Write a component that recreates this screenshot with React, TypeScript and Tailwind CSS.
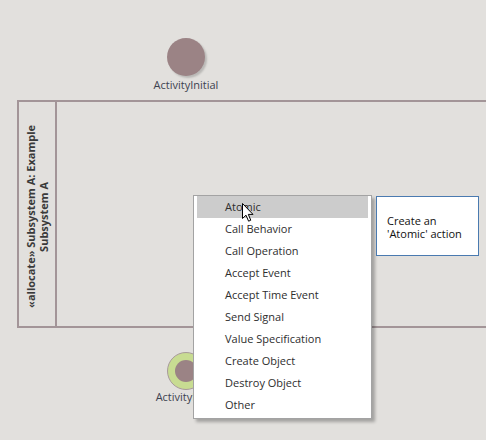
const items = [
  "Atomic",
  "Call Behavior",
  "Call Operation",
  "Accept Event",
  "Accept Time Event",
  "Send Signal",
  "Value Specification",
  "Create Object",
  "Destroy Object",
  "Other",
];

function Cursor() {
  return (
    <svg width="13" height="20" viewBox="0 0 13 20" className="absolute left-[242px] top-[203px]">
      <path d="M0.5 0.5 L0.5 15.5 L4 12.2 L6.6 18.2 L8.8 17.2 L6.3 11.4 L11 11.4 Z" fill="#fff" stroke="#000" strokeWidth="1" strokeLinejoin="round" />
    </svg>
  );
}

export default function App() {
  return (
    <div className="relative w-[486px] h-[440px] overflow-hidden bg-[#e2e0dd] font-['Open_Sans',sans-serif]">
      {/* initial node */}
      <div className="absolute left-[125px] top-[38px] w-[122px] flex flex-col items-center">
        <div className="w-[38px] h-[38px] rounded-full bg-[#9b8385] shadow-[2px_2px_2px_rgba(0,0,0,0.18)]" />
        <div className="mt-[1px] text-[11px] text-[#3d4250]">ActivityInitial</div>
      </div>

      {/* partition */}
      <div className="absolute left-[17px] top-[100px] w-[490px] h-[228px] flex border-2 border-[#a39598]">
        <div className="w-[38px] h-full border-r-2 border-[#a39598] flex items-center justify-center">
          <div className="[writing-mode:vertical-rl] rotate-180 text-center text-[11px] leading-[13px] font-bold text-[#3a3a3a] whitespace-nowrap translate-y-[2px]">
            «allocate» Subsystem A: Example
            <br />
            Subsystem A
          </div>
        </div>
        <div className="flex-1" />
      </div>

      {/* bottom node */}
      <div className="absolute left-[125px] top-[352px] w-[122px] flex flex-col items-center">
        <div className="w-[38px] h-[38px] rounded-full bg-[#c8dc92] border border-[#a89a9a] flex items-center justify-center">
          <div className="w-[22px] h-[22px] rounded-full bg-[#9b8385]" />
        </div>
        <div className="mt-[-1px] text-[11px] text-[#3d4250]">ActivityFinal</div>
      </div>

      {/* context menu */}
      <div className="absolute left-[193px] top-[195px] w-[179px] bg-white border border-[#a3a3a3] shadow-[3px_3px_3px_rgba(0,0,0,0.28)] px-[3px] pb-[2px]">
        <div className="flex flex-col">
          {items.map((it, i) => (
            <div
              key={it}
              className={`h-[22px] flex items-center pl-[28px] text-[11px] text-[#2e2e2e] ${i === 0 ? "bg-[#cccccc]" : ""}`}
            >
              {it}
            </div>
          ))}
        </div>
      </div>

      {/* tooltip */}
      <div className="absolute left-[376px] top-[196px] w-[103px] h-[60px] bg-white border border-[#4a7ab0] pl-[10px] pt-[17px] flex flex-col text-[11px] leading-[13px] text-[#111]">
        <span>Create an</span>
        <span>'Atomic' action</span>
      </div>

      <Cursor />
    </div>
  );
}
